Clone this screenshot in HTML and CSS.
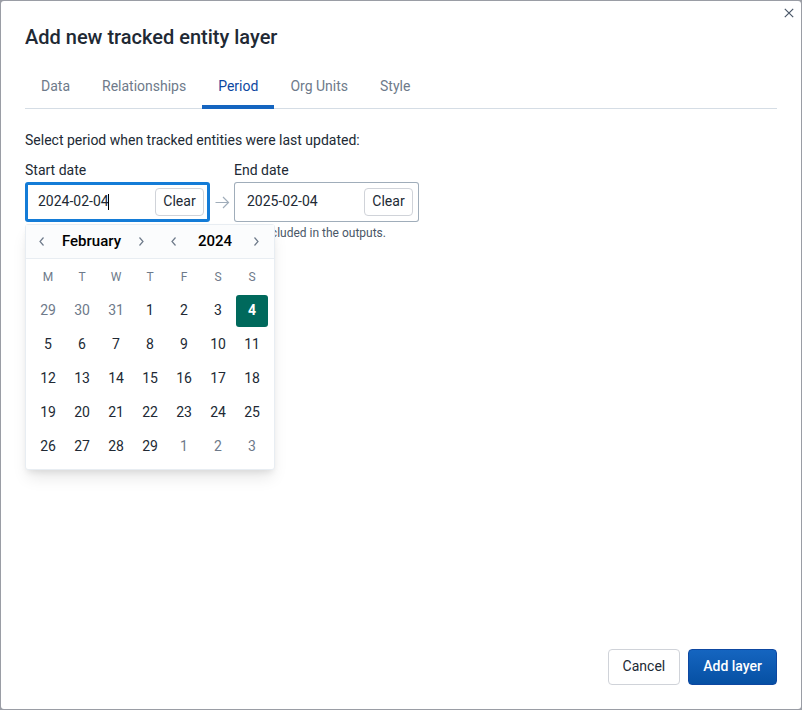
FILE: index.html
```html
<!DOCTYPE html>
<html lang="en">
<head>
<meta charset="utf-8">
<meta name="viewport" content="width=device-width, initial-scale=1">
<title>Add new tracked entity layer</title>
<link rel="stylesheet" href="styles.css">
</head>
<body>
<main class="modal" role="dialog" aria-labelledby="modal-title">
  <button class="close" type="button" aria-label="Close">
    <svg width="10" height="10" viewBox="0 0 10 10"><path d="M.8.8l8.4 8.4M9.2.8L.8 9.2" fill="none" stroke="currentColor" stroke-width="1.2"/></svg>
  </button>
  <h1 class="title" id="modal-title">Add new tracked entity layer</h1>
  <div class="tabs" role="tablist">
    <button class="tab" type="button" role="tab">Data</button>
    <button class="tab" type="button" role="tab">Relationships</button>
    <button class="tab tab-selected" type="button" role="tab" aria-selected="true">Period</button>
    <button class="tab" type="button" role="tab">Org Units</button>
    <button class="tab" type="button" role="tab">Style</button>
  </div>
  <section class="content">
    <p class="intro">Select period when tracked entities were last updated:</p>
    <div class="dates">
      <div class="field">
        <label class="label" for="start">Start date</label>
        <div class="control control-focus">
          <input class="date" id="start" type="text" value="2024-02-04">
          <span class="caret"></span>
          <button class="button clear" type="button">Clear</button>
        </div>
        <div class="calendar">
          <div class="calendar-nav">
            <div class="stepper">
              <button class="step" type="button" aria-label="Previous month"><svg width="16" height="16" viewBox="0 0 16 16"><path d="M9.500 4.500L6 8.500l3.500 4" fill="none" stroke="currentColor" stroke-width="1.200"/></svg></button>
              <button class="current" type="button">February</button>
              <button class="step" type="button" aria-label="Next month"><svg width="16" height="16" viewBox="0 0 16 16"><path d="M6.500 4.500l3.500 4-3.500 4" fill="none" stroke="currentColor" stroke-width="1.200"/></svg></button>
            </div>
            <div class="stepper">
              <button class="step" type="button" aria-label="Previous year"><svg width="16" height="16" viewBox="0 0 16 16"><path d="M9.500 4.500L6 8.500l3.500 4" fill="none" stroke="currentColor" stroke-width="1.200"/></svg></button>
              <span class="current">2024</span>
              <button class="step" type="button" aria-label="Next year"><svg width="16" height="16" viewBox="0 0 16 16"><path d="M6.500 4.500l3.500 4-3.500 4" fill="none" stroke="currentColor" stroke-width="1.200"/></svg></button>
            </div>
          </div>
          <table class="days">
            <thead><tr><th>M</th><th>T</th><th>W</th><th>T</th><th>F</th><th>S</th><th>S</th></tr></thead>
            <tbody>
              <tr><td class="other">29</td><td class="other">30</td><td class="other">31</td><td>1</td><td>2</td><td>3</td><td class="selected">4</td></tr>
              <tr><td>5</td><td>6</td><td>7</td><td>8</td><td>9</td><td>10</td><td>11</td></tr>
              <tr><td>12</td><td>13</td><td>14</td><td>15</td><td>16</td><td>17</td><td>18</td></tr>
              <tr><td>19</td><td>20</td><td>21</td><td>22</td><td>23</td><td>24</td><td>25</td></tr>
              <tr><td>26</td><td>27</td><td>28</td><td>29</td><td class="other">1</td><td class="other">2</td><td class="other">3</td></tr>
            </tbody>
          </table>
        </div>
      </div>
      <svg class="arrow" width="16" height="16" viewBox="0 0 16 16"><path d="M1.500 8.500h12.500M9 3l5.500 5.500-5.500 5.500" fill="none" stroke="currentColor" stroke-width="1.200"/></svg>
      <div class="field">
        <label class="label" for="end">End date</label>
        <div class="control">
          <input class="date" id="end" type="text" value="2025-02-04">
          <button class="button clear" type="button">Clear</button>
        </div>
      </div>
    </div>
    <p class="help">Start and end dates are inclusive and will be included in the outputs.</p>
  </section>
  <footer class="actions">
    <button class="button" type="button">Cancel</button>
    <button class="button primary" type="button">Add layer</button>
  </footer>
</main>
</body>
</html>
```
FILE: styles.css
```css
* {
  box-sizing: border-box;
}

body {
  margin: 0;
  padding: 1px;
  min-height: 100vh;
  display: flex;
  background: #9a9da5;
  color: #212934;
  font-family: Roboto, "Liberation Sans", sans-serif;
  font-size: 14px;
  line-height: 20px;
}

button,
input {
  font: inherit;
  color: inherit;
}

button {
  padding: 0;
  border: 0;
  background: none;
}

.modal {
  position: relative;
  flex: 1;
  display: flex;
  flex-direction: column;
  padding: 24px;
  border-radius: 3px;
  background: #fff;
}

.close {
  position: absolute;
  top: 0;
  right: 0;
  width: 24px;
  height: 24px;
  display: grid;
  place-items: center;
  color: #4a5768;
}

.title {
  margin: 0;
  font-size: 20px;
  font-weight: 500;
  line-height: 24px;
}

.tabs {
  display: flex;
  margin-top: 16px;
  box-shadow: inset 0 -1px #d5dde5;
}

.tab {
  padding: 11px 16px 9px;
  border-bottom: 4px solid transparent;
  color: #6e7a8a;
}

.tab-selected {
  border-color: #1565c0;
  color: #0d47a1;
}

.content {
  flex: 1;
  padding-top: 21px;
}

.intro {
  margin: 0;
}

.dates {
  display: flex;
  align-items: flex-end;
  gap: 4px;
  margin-top: 10px;
}

.field {
  position: relative;
}

.label {
  display: block;
  margin-bottom: 2px;
}

.control {
  position: relative;
  display: flex;
  align-items: center;
  width: 185px;
  height: 40px;
  padding: 0 6px 0 13px;
  border-radius: 3px;
  box-shadow: inset 0 0 0 1px #a0adba;
}

.control-focus {
  box-shadow: inset 0 0 0 3px #147cd7;
}

.date {
  flex: 1;
  min-width: 0;
  padding: 0 0 2px;
  border: 0;
  outline: 0;
  background: none;
}

.caret {
  position: absolute;
  left: 83px;
  width: 1px;
  height: 16px;
  background: #000;
}

.arrow {
  margin: 0 0 12px;
  color: #a0adba;
}

.button {
  height: 36px;
  padding: 0 14px 2px;
  border: 1px solid #d0d3d9;
  border-radius: 4px;
  background: #fff;
}

.clear {
  width: 49px;
  height: 28px;
  padding: 0 0 2px;
}

.help {
  margin: 4px 0 0;
  color: #4a5768;
  font-size: 12px;
  line-height: 14px;
}

.calendar {
  position: absolute;
  z-index: 1;
  top: 64px;
  left: 0;
  width: 250px;
  border: 1px solid #e8edf2;
  border-radius: 3px;
  background: #fff;
  box-shadow: 0 10px 15px -3px rgba(0, 0, 0, .1), 0 4px 6px -2px rgba(0, 0, 0, .08);
}

.calendar-nav {
  display: flex;
  gap: 17px;
  padding: 4px 10px 5px 8px;
  border-bottom: 1px solid #e8edf2;
  background: #fbfcfd;
}

.stepper {
  flex: 1;
  display: flex;
  align-items: center;
  justify-content: space-between;
}

.stepper:first-child {
  flex: 0 0 115px;
}

.step {
  height: 24px;
  display: flex;
  align-items: center;
  color: #6e7a8a;
}

.current {
  color: #000;
  font-size: 15px;
  font-weight: 500;
}

.days {
  margin: 0 auto;
  padding-bottom: 4px;
  border-spacing: 2px;
}

.days th,
.days td {
  width: 32px;
  height: 32px;
  padding: 0;
  border-radius: 3px;
  text-align: center;
}

.days td {
  padding-bottom: 2px;
}

.days th {
  color: #6e7a8a;
  font-size: 12px;
  font-weight: 400;
}

.days .other {
  color: #6e7a8a;
}

.days .selected {
  background: #00695c;
  color: #fff;
  font-weight: 700;
}

.actions {
  display: flex;
  justify-content: flex-end;
  gap: 8px;
}

.primary {
  border-color: #0d47a1;
  background: linear-gradient(#1565c0, #0650a3);
  color: #fff;
  font-weight: 500;
}
```
